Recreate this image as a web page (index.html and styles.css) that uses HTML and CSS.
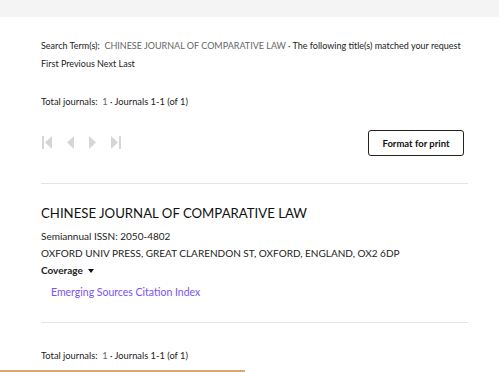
FILE: index.html
```html
<!DOCTYPE html>
<html>
<head>
<meta charset="utf-8">
<link rel="stylesheet" href="styles.css">
</head>
<body>
<div class="topbar"></div>
<main class="content">
  <p class="search">Search Term(s):&nbsp; <span class="term">CHINESE JOURNAL OF COMPARATIVE LAW</span> · The following title(s) matched your request</p>
  <p class="navlinks">First Previous Next Last</p>
  <p class="total">Total journals:&nbsp; <span class="num">1</span> · Journals 1-1 (of 1)</p>
  <div class="toolbar">
    <div class="pager">
      <svg width="11" height="13" viewBox="0 0 11 13"><rect x="0" y="0" width="2" height="13" fill="#d6d6d6"/><polygon points="3,6.5 10,0 10,13" fill="#d6d6d6"/></svg>
      <svg width="8" height="13" viewBox="0 0 8 13"><polygon points="0,6.5 7,0 7,13" fill="#d6d6d6"/></svg>
      <svg width="8" height="13" viewBox="0 0 8 13"><polygon points="7,6.5 0,0 0,13" fill="#d6d6d6"/></svg>
      <svg width="11" height="13" viewBox="0 0 11 13"><polygon points="7,6.5 0,0 0,13" fill="#d6d6d6"/><rect x="8" y="0" width="2" height="13" fill="#d6d6d6"/></svg>
    </div>
    <button class="print">Format for print</button>
  </div>
  <hr class="rule">
  <section class="record">
    <h2 class="title">CHINESE JOURNAL OF COMPARATIVE LAW</h2>
    <p class="meta first">Semiannual ISSN: 2050-4802</p>
    <p class="meta">OXFORD UNIV PRESS, GREAT CLARENDON ST, OXFORD, ENGLAND, OX2 6DP</p>
    <p class="coverage">Coverage <span class="caret"></span></p>
    <p class="index">Emerging Sources Citation Index</p>
  </section>
  <hr class="rule">
  <p class="total bottom">Total journals:&nbsp; <span class="num">1</span> · Journals 1-1 (of 1)</p>
</main>
<div class="orange"></div>
</body>
</html>
```
FILE: styles.css
```css
html, body {
  margin: 0;
  padding: 0;
  background: #fff;
  height: 372px;
  overflow: hidden;
}
body {
  font-family: "Lato", "Liberation Sans", sans-serif;
  color: #222;
  font-size: 10px;
  position: relative;
}
.topbar {
  height: 17px;
  background: #f4f4f4;
}
.content {
  padding: 0 31px 0 41px;
}
p { margin: 0; }
.search {
  margin-top: 22px;
  line-height: 14px;
  font-size: 9px;
  white-space: nowrap;
}
.term {
  color: #666;
}
.navlinks {
  margin-top: 4px;
  line-height: 14px;
  font-size: 9px;
}
.total {
  margin-top: 24px;
  line-height: 14px;
  font-size: 9.3px;
}
.num { color: #666; }
.toolbar {
  display: flex;
  justify-content: space-between;
  align-items: center;
  margin-top: 19px;
  padding-right: 4px;
}
.pager {
  display: flex;
  gap: 14px;
  align-items: center;
  padding-left: 1px;
}
.print {
  font-family: inherit;
  font-weight: bold;
  font-size: 9.5px;
  color: #111;
  background: #fff;
  border: 1px solid #222;
  border-radius: 3px;
  width: 96px;
  height: 26px;
  padding: 0;
  margin-top: 2px;
}
.rule {
  border: 0;
  border-top: 1px solid #e4e4e4;
  margin: 29px 0 0 0;
}
.toolbar + .rule { margin-top: 27px; }
.record { padding-top: 20px; }
.title {
  margin: 0;
  font-weight: normal;
  font-size: 13.2px;
  line-height: 18px;
  color: #111;
}
.meta {
  margin-top: 2px;
  line-height: 15px;
}
.meta.first { margin-top: 7px; }
.coverage {
  margin-top: 2px;
  font-weight: bold;
  line-height: 15px;
}
.caret {
  display: inline-block;
  width: 0; height: 0;
  border-left: 3.5px solid transparent;
  border-right: 3.5px solid transparent;
  border-top: 4px solid #111;
  vertical-align: middle;
  margin-left: 3px;
}
.index {
  margin-top: 7px;
  padding-left: 10px;
  color: #7a52f4;
  font-size: 10.5px;
  line-height: 15px;
}
.record + .rule { margin-top: 22px; }
.total.bottom { margin-top: 26px; }
.orange {
  position: absolute;
  left: 0;
  bottom: 0;
  width: 245px;
  height: 2px;
  background: #d9a86c;
}
```
